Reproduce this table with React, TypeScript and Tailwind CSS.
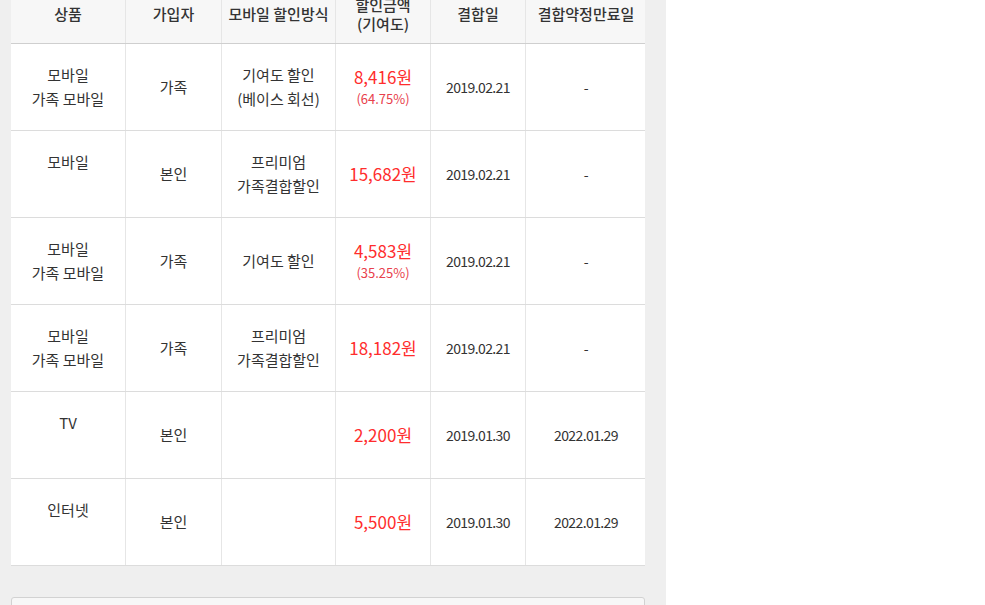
import React from "react";

type Row = {
  product: string[];
  member: string;
  method: string[];
  amount: string;
  rate?: string;
  joined: string;
  expires: string;
};

const rows: Row[] = [
  { product: ["모바일", "가족 모바일"], member: "가족", method: ["기여도 할인", "(베이스 회선)"], amount: "8,416원", rate: "(64.75%)", joined: "2019.02.21", expires: "-" },
  { product: ["모바일", ""], member: "본인", method: ["프리미엄", "가족결합할인"], amount: "15,682원", joined: "2019.02.21", expires: "-" },
  { product: ["모바일", "가족 모바일"], member: "가족", method: ["기여도 할인"], amount: "4,583원", rate: "(35.25%)", joined: "2019.02.21", expires: "-" },
  { product: ["모바일", "가족 모바일"], member: "가족", method: ["프리미엄", "가족결합할인"], amount: "18,182원", joined: "2019.02.21", expires: "-" },
  { product: ["TV", ""], member: "본인", method: [], amount: "2,200원", joined: "2019.01.30", expires: "2022.01.29" },
  { product: ["인터넷", ""], member: "본인", method: [], amount: "5,500원", joined: "2019.01.30", expires: "2022.01.29" },
];

const cols = "grid grid-cols-[115px_96px_114px_95px_95px_120px]";
const cell = "flex flex-col items-center justify-center text-center border-r border-[#e6e6e6]";

export default function App() {
  return (
    <div
      className="flex h-[605px] w-full overflow-hidden bg-white text-[15px] text-[#333]"
      style={{ fontFamily: '"Noto Sans CJK KR", "Noto Sans", sans-serif' }}
    >
      <div className="w-[666px] shrink-0 bg-[#efefef] pl-[11px] pr-[21px]">
        <div className="-mt-[16px] bg-white">
          <div className={`${cols} h-[60px] border-b border-[#cfcfcf] bg-[#f7f7f7] font-medium leading-[19px]`}>
            <div className={cell}>상품</div>
            <div className={cell}>가입자</div>
            <div className={cell}>모바일 할인방식</div>
            <div className={cell}>
              <span>할인금액</span>
              <span>(기여도)</span>
            </div>
            <div className={cell}>결합일</div>
            <div className={`${cell} border-r-0`}>결합약정만료일</div>
          </div>

          {rows.map((r, i) => (
            <div key={i} className={`${cols} h-[87px] border-b border-[#dcdcdc]`}>
              <div className={`${cell} leading-[24px]`}>
                <span>{r.product[0]}</span>
                <span className="h-[24px]">{r.product[1]}</span>
              </div>
              <div className={cell}>{r.member}</div>
              <div className={`${cell} leading-[24px]`}>
                {r.method.map((m) => (
                  <span key={m}>{m}</span>
                ))}
              </div>
              <div className={cell}>
                <span className="text-[17px] leading-[24px] text-[#ff2d2d]">{r.amount}</span>
                {r.rate && <span className="text-[13px] leading-[20px] text-[#e8404c]">{r.rate}</span>}
              </div>
              <div className={`${cell} text-[14px] tracking-[-0.6px]`}>{r.joined}</div>
              <div className={`${cell} border-r-0 text-[14px] tracking-[-0.6px]`}>{r.expires}</div>
            </div>
          ))}
        </div>

        <div className="mt-[31px] h-[40px] rounded-[3px] border border-[#d2d2d2] bg-[#f7f7f7]" />
      </div>
      <div className="flex-1 bg-white" />
    </div>
  );
}
